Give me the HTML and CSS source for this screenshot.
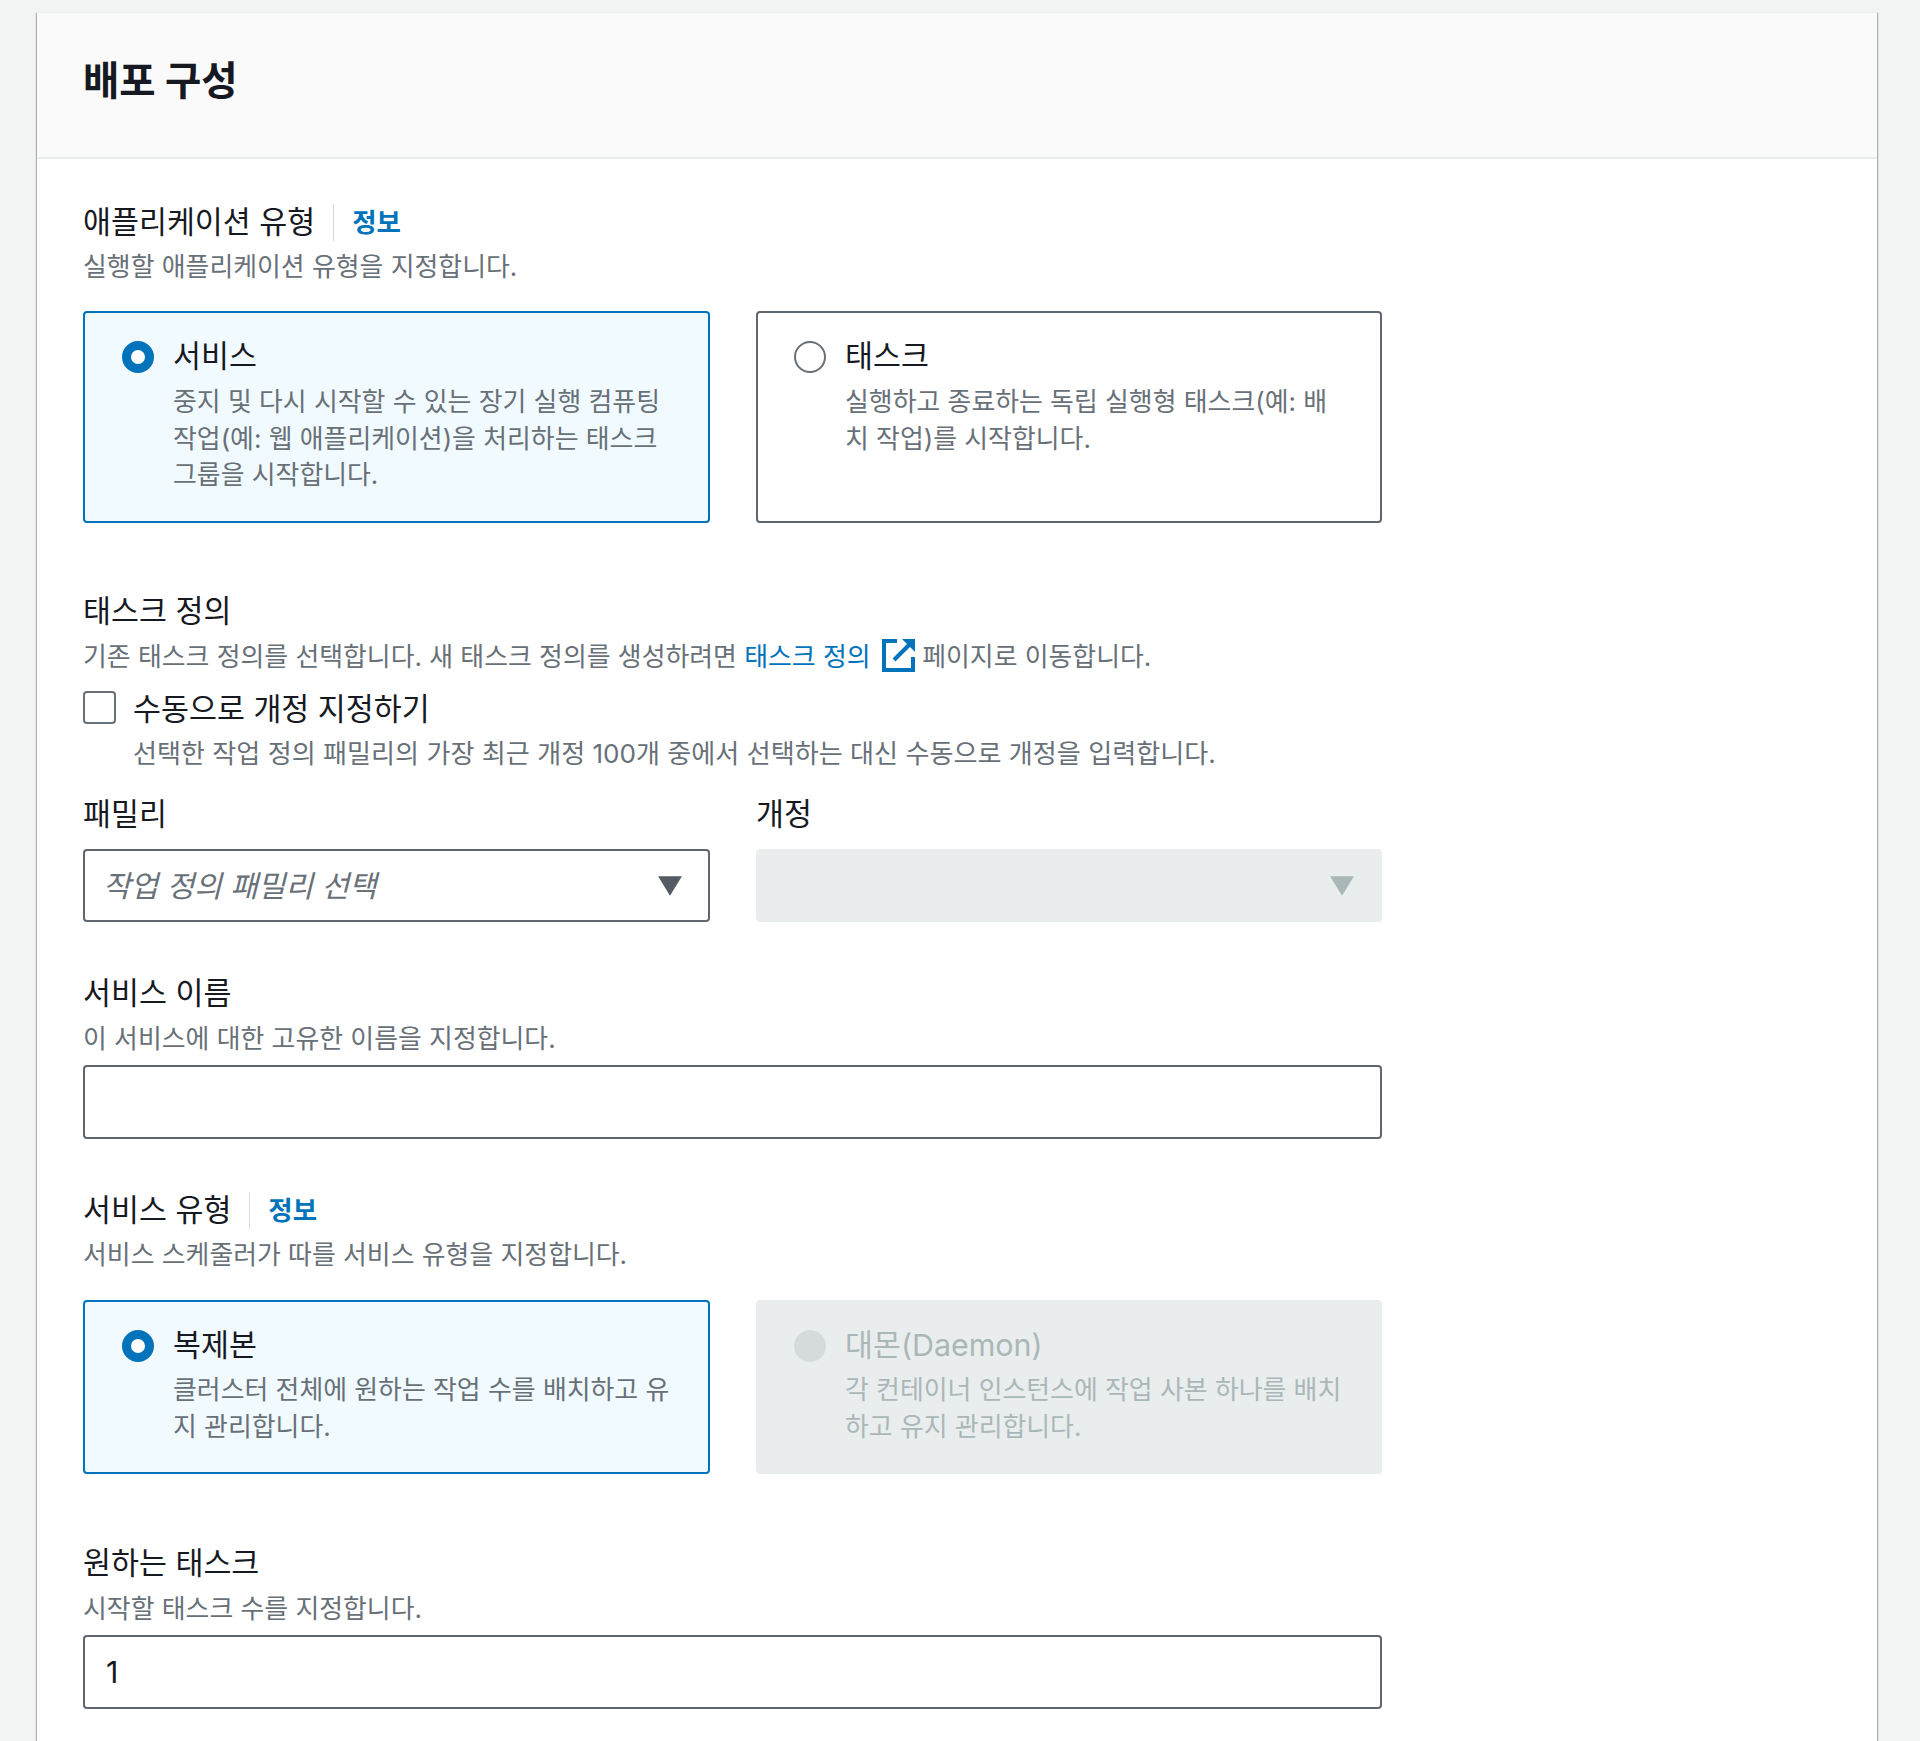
FILE: index.html
```html
<!DOCTYPE html>
<html lang="ko">
<head>
<meta charset="utf-8">
<title>배포 구성</title>
<link rel="stylesheet" href="styles.css">
</head>
<body>
<div class="card">
	<div class="card-header">
		<h2>배포 구성</h2>
	</div>
	<div class="card-body">

		<!--애플리케이션 유형-->
		<div class="label-row">
			<span class="label">애플리케이션 유형</span>
			<a class="info">정보</a>
		</div>
		<p class="hint hint-tight">실행할 애플리케이션 유형을 지정합니다.</p>
		<div class="tiles tiles-first">
			<div class="tile selected">
				<span class="radio"></span>
				<div>
					<div class="tile-title">서비스</div>
					<div class="tile-text">중지 및 다시 시작할 수 있는 장기 실행 컴퓨팅 작업(예: 웹 애플리케이션)을 처리하는 태스크 그룹을 시작합니다.</div>
				</div>
			</div>
			<div class="tile">
				<span class="radio"></span>
				<div>
					<div class="tile-title">태스크</div>
					<div class="tile-text">실행하고 종료하는 독립 실행형 태스크(예: 배치 작업)를 시작합니다.</div>
				</div>
			</div>
		</div>

		<!--태스크 정의-->
		<div class="label-row section-gap">
			<span class="label">태스크 정의</span>
		</div>
		<p class="hint">기존 태스크 정의를 선택합니다. 새 태스크 정의를 생성하려면 <a class="link">태스크 정의</a>
			<svg class="ext-icon" viewBox="0 0 33 33"><path d="M15 2H2v29h29V18" fill="none" stroke="#0073bb" stroke-width="4"/><path d="M12 21L28 5" fill="none" stroke="#0073bb" stroke-width="4"/><path d="M20 0h13v13z" fill="#0073bb"/></svg>
			페이지로 이동합니다.</p>
		<div class="check-row">
			<span class="checkbox"></span>
			<span class="label">수동으로 개정 지정하기</span>
		</div>
		<p class="hint check-hint">선택한 작업 정의 패밀리의 가장 최근 개정 100개 중에서 선택하는 대신 수동으로 개정을 입력합니다.</p>
		<div class="tiles select-row">
			<div>
				<div class="label select-label">패밀리</div>
				<div class="select">
					<span class="placeholder">작업 정의 패밀리 선택</span>
					<svg class="caret" viewBox="0 0 24 20"><path d="M1 1h22L12 19z" fill="#545b64"/></svg>
				</div>
			</div>
			<div>
				<div class="label select-label">개정</div>
				<div class="select disabled">
					<span></span>
					<svg class="caret" viewBox="0 0 24 20"><path d="M1 1h22L12 19z" fill="#aab7b8"/></svg>
				</div>
			</div>
		</div>

		<!--서비스 이름-->
		<div class="label-row field-gap">
			<span class="label">서비스 이름</span>
		</div>
		<p class="hint">이 서비스에 대한 고유한 이름을 지정합니다.</p>
		<input class="text-input" type="text">

		<!--서비스 유형-->
		<div class="label-row field-gap">
			<span class="label">서비스 유형</span>
			<a class="info">정보</a>
		</div>
		<p class="hint hint-tight">서비스 스케줄러가 따를 서비스 유형을 지정합니다.</p>
		<div class="tiles tiles-service">
			<div class="tile selected short">
				<span class="radio"></span>
				<div>
					<div class="tile-title">복제본</div>
					<div class="tile-text">클러스터 전체에 원하는 작업 수를 배치하고 유지 관리합니다.</div>
				</div>
			</div>
			<div class="tile disabled short">
				<span class="radio"></span>
				<div>
					<div class="tile-title">대몬(Daemon)</div>
					<div class="tile-text">각 컨테이너 인스턴스에 작업 사본 하나를 배치하고 유지 관리합니다.</div>
				</div>
			</div>
		</div>

		<!--원하는 태스크-->
		<div class="label-row last-gap">
			<span class="label">원하는 태스크</span>
		</div>
		<p class="hint">시작할 태스크 수를 지정합니다.</p>
		<input class="text-input last-input" type="text" value="1">
	</div>
</div>
</body>
</html>
```

FILE: styles.css
```css
* {
	box-sizing: border-box;
	font-family: Inter, "Noto Sans CJK KR", sans-serif;
}
html, body {
	height: 1741px;
	margin: 0;
	overflow: hidden;
}
body {
	background: #f2f3f3;
	padding: 12px 43px 0 37px;
	color: #16191f;
}
p {
	margin: 0;
}
.card {
	width: 1840px;
	height: 1800px;
	background: #fff;
	border-top: 1px solid #eaeded;
	box-shadow: 1px 1px 1px 0 rgba(0,28,36,.3), -1px 1px 1px 0 rgba(0,28,36,.3);
}
.card-header {
	height: 146px;
	padding: 46px 46px 0;
	background: #fafafa;
	border-bottom: 2px solid #eaeded;
}
.card-header h2 {
	margin: 0;
	font-size: 39.5px;
	line-height: 44px;
	font-weight: 700;
}
.card-body {
	padding: 43px 46px 0;
}
.label-row {
	display: flex;
	align-items: center;
	height: 37px;
}
.label {
	margin-top: 3px;
	font-size: 30.4px;
	line-height: 37px;
}
.info {
	margin-top: 3px;
	margin-left: 18px;
	padding-left: 18px;
	border-left: 1px solid #d5dbdb;
	font-size: 26.5px;
	line-height: 37px;
	font-weight: 700;
	color: #0073bb;
}
.hint {
	margin-top: 10px;
	font-size: 25.9px;
	line-height: 37px;
	color: #687078;
}
.hint-tight {
	margin-top: 9px;
}
.link {
	color: #0073bb;
}
.ext-icon {
	width: 33px;
	height: 33px;
	margin: 0 0 0 4px;
	vertical-align: -6px;
}
.tiles {
	display: grid;
	grid-template-columns: 627px 626px;
	column-gap: 46px;
}
.tiles-first {
	margin-top: 26px;
}
.tiles-service {
	margin-top: 27px;
}
.tile {
	display: flex;
	height: 212px;
	padding: 25px 34px 0 37px;
	border: 2px solid #5f6670;
	border-radius: 4px;
}
.tile + .tile {
	padding-left: 36px;
}
.tile.short {
	height: 174px;
}
.tile.selected {
	background: #f1faff;
	border-color: #0073bb;
}
.tile.disabled {
	background: #eaeded;
	border-color: #eaeded;
}
.radio {
	flex: none;
	width: 32px;
	height: 32px;
	margin: 3px 19px 0 0;
	border: 2px solid #687078;
	border-radius: 50%;
	background: #fff;
}
.selected .radio {
	border: 9px solid #0073bb;
}
.disabled .radio {
	border-color: #d5dbdb;
	background: #d5dbdb;
}
.tile-title {
	font-size: 30.4px;
	line-height: 37px;
}
.tile-text {
	margin-top: 9px;
	font-size: 25.9px;
	line-height: 36.6px;
	color: #687078;
}
.short .tile-text {
	margin-top: 8px;
}
.disabled .tile-title, .disabled .tile-text {
	color: #aab7b8;
}
.section-gap {
	margin-top: 68px;
}
.last-gap {
	margin-top: 69px;
}
.field-gap {
	margin-top: 51px;
}
.check-row {
	display: flex;
	align-items: center;
	gap: 17px;
	height: 37px;
	margin-top: 14px;
}
.checkbox {
	width: 33px;
	height: 33px;
	border: 2px solid #687078;
	border-radius: 4px;
	background: #fff;
}
.check-hint {
	margin-top: 9px;
	padding-left: 50px;
	font-size: 26.1px;
}
.select-row {
	margin-top: 22px;
}
.select-label {
	margin-top: 2px;
}
.select {
	display: flex;
	align-items: center;
	justify-content: space-between;
	height: 73px;
	margin-top: 16px;
	padding: 0 25px 0 18px;
	background: #fff;
	border: 2px solid #5f6670;
	border-radius: 4px;
}
.select.disabled {
	background: #eaeded;
	border-color: #eaeded;
}
.placeholder {
	margin-bottom: 3px;
	font-size: 30px;
	font-style: italic;
	color: #687078;
}
.caret {
	width: 26px;
	height: 22px;
}
.text-input {
	display: block;
	width: 1299px;
	height: 74px;
	margin-top: 8px;
	padding: 0 21px;
	background: #fff;
	border: 2px solid #5f6670;
	border-radius: 4px;
	font-size: 30.4px;
	color: #16191f;
}
.last-input {
	margin-top: 8px;
}
```
